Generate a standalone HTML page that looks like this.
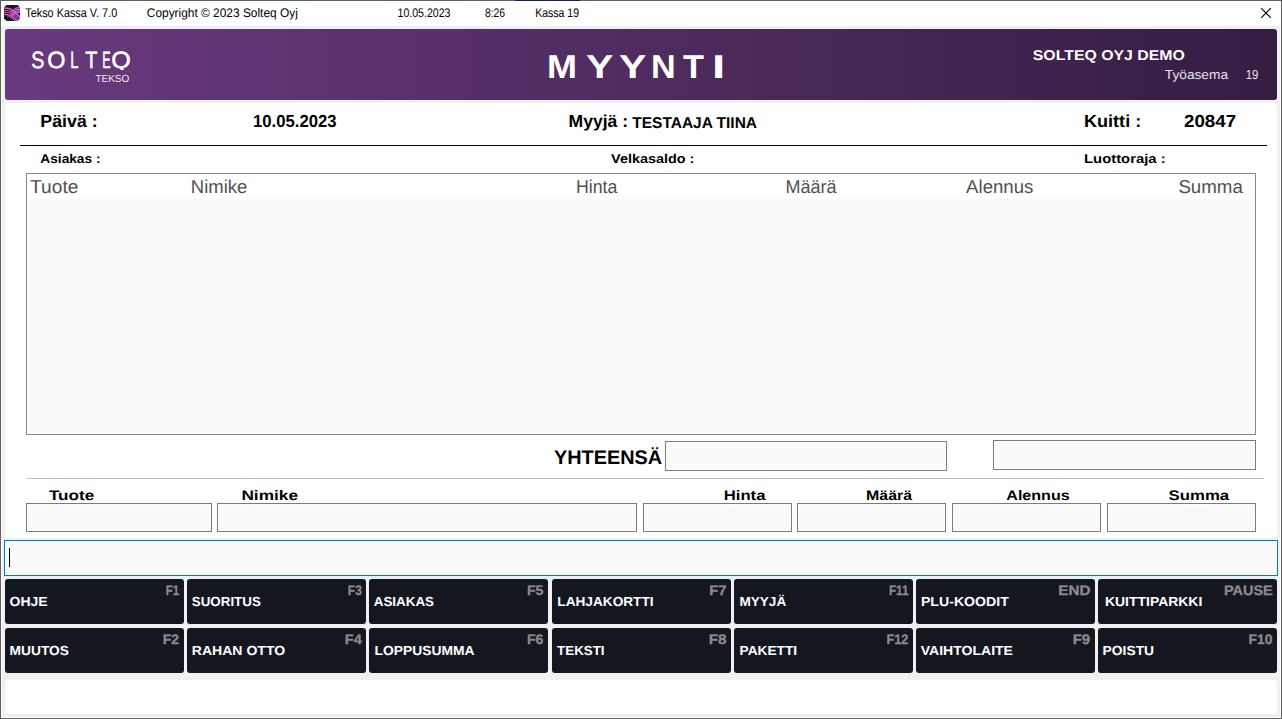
<!DOCTYPE html>
<html lang="fi">
<head>
<meta charset="utf-8">
<title>Tekso Kassa V. 7.0</title>
<style>
*{box-sizing:border-box;margin:0;padding:0}
html,body{width:1282px;height:719px;overflow:hidden;background:#f0f0f0}
body{position:relative;text-rendering:geometricPrecision;font-family:"Liberation Sans",sans-serif;color:#000}
.abs{position:absolute;white-space:nowrap;line-height:1;transform-origin:0 0}
/* window frame */
#frame{left:0;top:0;width:1282px;height:719px;border:1px solid #606060;box-shadow:inset 0 0 0 1px #fff}
#titlebar{left:1px;top:1px;width:1280px;height:25px;background:#fff}
/* banner */
#banner{left:5px;top:29px;width:1272px;height:71px;border-radius:3px;
 background:linear-gradient(90deg,#693a7e,#351d42)}
/* panels */
#panel{left:5px;top:103px;width:1272px;height:435px;background:#fff;border-radius:4px}
#status{left:5px;top:680px;width:1272px;height:34px;background:#fff;border-radius:4px}
#list{left:26px;top:173px;width:1230px;height:262px;border:1px solid #828790;background:#fff}
#listbody{left:28px;top:199px;width:1226px;height:234px;background:#fafafa}
.box{border:1px solid #7a7a7a;background:#fafafa;box-shadow:inset 0 0 0 1px #fff}
#logo span{-webkit-text-stroke:0.5px #fff}
#logo span:last-child{clip-path:inset(-5px -5px 2.4px -5px)}
.pl span{display:inline-block;transform-origin:0 0;line-height:1;vertical-align:baseline}
.btn{background:#141720;border-radius:3px;height:45px;width:179px}
</style>
</head>
<body>
<div id="frame" class="abs"></div>
<div id="titlebar" class="abs"></div>
<div id="topseg" class="abs" style="left:515px;top:0;width:65px;height:1px;background:#10224f"></div>

<!-- title bar icon -->
<svg class="abs" style="left:4px;top:5px" width="16" height="16" viewBox="0 0 16 16">
 <defs><linearGradient id="ig" x1="0" y1="0" x2="16" y2="0" gradientUnits="userSpaceOnUse"><stop offset="0" stop-color="#f0559a"/><stop offset="0.45" stop-color="#e45cd0"/><stop offset="1" stop-color="#d064f5"/></linearGradient>
 <clipPath id="ic"><path d="M2.5 0H13.5L16 2.5V13.5L13.5 16H2.5L0 13.5V2.5Z"/></clipPath></defs>
 <path d="M2.5 0H13.5L16 2.5V13.5L13.5 16H2.5L0 13.5V2.5Z" fill="#15171e"/>
 <g clip-path="url(#ic)" stroke="url(#ig)" fill="none">
 <path d="M-1 3.1 C4 3.1 5.5 3.30 7.5 4.60 L17.5 13.20" stroke-width="1.5"/>
<path d="M-1 5.45 C4 5.45 5.5 5.65 7.5 6.95 L17.5 15.55" stroke-width="1.0"/>
<path d="M-1 7.35 C4 7.35 5.5 7.55 7.5 8.85 L17.5 17.45" stroke-width="1.0"/>
<path d="M-1 9.4 C4 9.4 5.5 9.60 7.5 10.90 L17.5 19.50" stroke-width="1.3"/>
<path d="M3.0 10.9 C5 11.20 6.5 11.90 7.5 12.90 L17.5 21.50" stroke-width="0.9"/>
 <path d="M17 2.6 C13.5 2.6 12 3.00 10 4.20 L6.2 7.60" stroke-width="0.75"/>
<path d="M17 2.6 C13.5 2.6 12 3.00 10 4.20" stroke-width="1.0"/>
<path d="M17 4.2 C13.5 4.2 12 4.60 10 5.80 L6.2 9.20" stroke-width="0.75"/>
<path d="M17 4.2 C13.5 4.2 12 4.60 10 5.80" stroke-width="1.0"/>
<path d="M17 5.8 C13.5 5.8 12 6.20 10 7.40 L6.2 10.80" stroke-width="0.75"/>
<path d="M17 5.8 C13.5 5.8 12 6.20 10 7.40" stroke-width="1.0"/>
<path d="M17 7.4 C13.5 7.4 12 7.80 10 9.00 L6.2 12.40" stroke-width="0.75"/>
<path d="M17 7.4 C13.5 7.4 12 7.80 10 9.00" stroke-width="1.0"/>
 </g>
</svg>
<div id="t1" class="abs" style="left:25px;top:7px;font-size:12.5px;transform:translateX(0.30px) scaleX(0.868);color:#000;">Tekso Kassa V. 7.0</div>
<div id="t2" class="abs" style="left:146px;top:7px;font-size:12.5px;transform:translateX(0.80px) scaleX(0.952);color:#000;">Copyright © 2023 Solteq Oyj</div>
<div id="t3" class="abs" style="left:397px;top:7px;font-size:12.5px;transform:translateX(0.50px) scaleX(0.847);color:#000;">10.05.2023</div>
<div id="t4" class="abs" style="left:484px;top:7px;font-size:12.5px;transform:translateX(0.89px) scaleX(0.829);color:#000;">8:26</div>
<div id="t5" class="abs" style="left:535px;top:7px;font-size:12.5px;transform:translateX(0.25px) scaleX(0.840);color:#000;">Kassa 19</div>
<svg class="abs" style="left:1261px;top:8px" width="10" height="10" viewBox="0 0 10 10"><path d="M0.2 0.2 L9.8 9.8 M9.8 0.2 L0.2 9.8" stroke="#000" stroke-width="1.15" fill="none"/></svg>

<!-- banner -->
<div id="banner" class="abs"></div>
<div id="logo" class="abs pl" style="left:31px;top:49px;font-size:23.5px;font-weight:400;color:#fff;transform:translateX(0.16px)"><span style="width:15.95px;transform:scaleX(0.839)">S</span><span style="width:23.52px;transform:scaleX(0.994)">O</span><span style="width:14.38px;transform:scaleX(0.625)">L</span><span style="width:16.96px;transform:scaleX(0.850)">T</span><span style="width:8.87px;transform:scaleX(0.536)">E</span><span style="width:21.16px;transform:scaleX(1.065)">Q</span></div>
<div id="logo2" class="abs" style="left:95px;top:75px;font-size:10.3px;transform:translateX(0.40px) scaleX(0.969);color:#eee8f2;">TEKSO</div>
<div id="demo" class="abs" style="left:1032px;top:49px;font-size:14.2px;font-weight:bold;transform:translateX(0.80px) scaleX(1.117);color:#fff;">SOLTEQ OYJ DEMO</div>
<div id="tyo" class="abs" style="left:1164px;top:68px;font-size:13px;transform:translateX(0.80px) scaleX(1.054);color:#e9e3ee;">Työasema</div>
<div id="tyo19" class="abs" style="left:1245px;top:68px;font-size:13px;transform:translateX(0.80px) scaleX(0.871);color:#e9e3ee;">19</div>
<div id="myynti" class="abs pl" style="left:546px;top:50px;font-size:33.0px;font-weight:700;color:#fff;transform:translateX(0.92px)"><span style="width:39.38px;transform:scaleX(1.092)">M</span><span style="width:32.70px;transform:scaleX(1.241)">Y</span><span style="width:31.83px;transform:scaleX(1.241)">Y</span><span style="width:32.57px;transform:scaleX(1.035)">N</span><span style="width:28.82px;transform:scaleX(1.040)">T</span><span style="width:12.08px;transform:scaleX(1.440)">I</span></div>


<!-- main panel -->
<div id="panel" class="abs"></div>
<div id="paiva" class="abs" style="left:40px;top:113px;font-size:17.4px;font-weight:bold;transform:translateX(0.28px) scaleX(1.023);color:#000;">Päivä :</div>
<div id="pvm" class="abs" style="left:253px;top:113px;font-size:17.4px;font-weight:bold;transform:translateX(0.04px) scaleX(0.960);color:#000;">10.05.2023</div>
<div id="myyja" class="abs" style="left:568px;top:113px;font-size:17.4px;font-weight:bold;transform:translateX(0.48px) scaleX(1.011);color:#000;">Myyjä :</div>
<div id="testaaja" class="abs" style="left:632px;top:116px;font-size:15.6px;font-weight:bold;transform:translateX(0.30px) scaleX(0.993);color:#000;">TESTAAJA TIINA</div>
<div id="kuitti" class="abs" style="left:1083px;top:113px;font-size:17.4px;font-weight:bold;transform:translateX(0.96px) scaleX(1.040);color:#000;">Kuitti :</div>
<div id="knro" class="abs" style="left:1184px;top:113px;font-size:17.4px;font-weight:bold;transform:translateX(0.00px) scaleX(1.078);color:#000;">20847</div>
<div id="asiakas" class="abs" style="left:40px;top:153px;font-size:12.8px;font-weight:bold;transform:translateX(0.30px) scaleX(1.071);color:#000;">Asiakas :</div>
<div id="velka" class="abs" style="left:611px;top:153px;font-size:12.8px;font-weight:bold;transform:translateX(0.10px) scaleX(1.126);color:#000;">Velkasaldo :</div>
<div id="luotto" class="abs" style="left:1083px;top:153px;font-size:12.8px;font-weight:bold;transform:translateX(0.99px) scaleX(1.161);color:#000;">Luottoraja :</div>
<div id="hr1" class="abs" style="left:20px;top:145px;width:1247px;height:1px;background:#000"></div>


<div id="list" class="abs"></div>
<div id="listbody" class="abs"></div>
<div id="h1" class="abs" style="left:30px;top:178px;font-size:18.67px;transform:translateX(0.10px) scaleX(1.027);color:#505050;">Tuote</div>
<div id="h2" class="abs" style="left:190px;top:178px;font-size:18.67px;transform:translateX(0.81px) scaleX(0.992);color:#505050;">Nimike</div>
<div id="h3" class="abs" style="left:575px;top:178px;font-size:18.67px;transform:translateX(0.95px) scaleX(0.950);color:#505050;">Hinta</div>
<div id="h4" class="abs" style="left:785px;top:178px;font-size:18.67px;transform:translateX(0.53px) scaleX(0.964);color:#505050;">Määrä</div>
<div id="h5" class="abs" style="left:966px;top:178px;font-size:18.67px;transform:translateX(0.10px) scaleX(0.997);color:#505050;">Alennus</div>
<div id="h6" class="abs" style="left:1178px;top:178px;font-size:18.67px;transform:translateX(0.39px) scaleX(1.002);color:#505050;">Summa</div>

<div id="yht" class="abs" style="left:553px;top:449px;font-size:19.7px;font-weight:bold;transform:translateX(0.90px) scaleX(1.010);color:#000;">YHTEENSÄ</div>
<div id="tot1" class="abs box" style="left:665px;top:441px;width:282px;height:30px"></div>
<div id="tot2" class="abs box" style="left:993px;top:440px;width:263px;height:30px"></div>
<div id="hr2" class="abs" style="left:27px;top:478px;width:1237px;height:1px;background:#bebebe"></div>

<div id="l1" class="abs" style="left:48px;top:489px;font-size:13.8px;font-weight:bold;transform:translateX(0.90px) scaleX(1.240);color:#000;">Tuote</div>
<div id="l2" class="abs" style="left:241px;top:489px;font-size:13.8px;font-weight:bold;transform:translateX(0.39px) scaleX(1.253);color:#000;">Nimike</div>
<div id="l3" class="abs" style="left:723px;top:489px;font-size:13.8px;font-weight:bold;transform:translateX(0.68px) scaleX(1.212);color:#000;">Hinta</div>
<div id="l4" class="abs" style="left:866px;top:489px;font-size:13.8px;font-weight:bold;transform:translateX(0.09px) scaleX(1.154);color:#000;">Määrä</div>
<div id="l5" class="abs" style="left:1006px;top:489px;font-size:13.8px;font-weight:bold;transform:translateX(0.30px) scaleX(1.164);color:#000;">Alennus</div>
<div id="l6" class="abs" style="left:1168px;top:489px;font-size:13.8px;font-weight:bold;transform:translateX(0.60px) scaleX(1.216);color:#000;">Summa</div>
<div id="b1" class="abs box" style="left:26px;top:503px;width:186px;height:29px"></div>
<div id="b2" class="abs box" style="left:217px;top:503px;width:420px;height:29px"></div>
<div id="b3" class="abs box" style="left:643px;top:503px;width:149px;height:29px"></div>
<div id="b4" class="abs box" style="left:797px;top:503px;width:149px;height:29px"></div>
<div id="b5" class="abs box" style="left:952px;top:503px;width:149px;height:29px"></div>
<div id="b6" class="abs box" style="left:1107px;top:503px;width:149px;height:29px"></div>

<div id="input" class="abs" style="left:4px;top:540px;width:1274px;height:36px;border:1px solid #0078d7;background:#fafafa;box-shadow:inset 0 0 0 1px #fff"></div>
<div id="caret" class="abs" style="left:9px;top:548px;width:1px;height:19px;background:#000"></div>

<div class="abs btn" style="left:5px;top:579px"></div>
<div class="abs btn" style="left:187px;top:579px"></div>
<div class="abs btn" style="left:369px;top:579px"></div>
<div class="abs btn" style="left:552px;top:579px"></div>
<div class="abs btn" style="left:734px;top:579px"></div>
<div class="abs btn" style="left:916px;top:579px"></div>
<div class="abs btn" style="left:1098px;top:579px"></div>
<div class="abs btn" style="left:5px;top:628px"></div>
<div class="abs btn" style="left:187px;top:628px"></div>
<div class="abs btn" style="left:369px;top:628px"></div>
<div class="abs btn" style="left:552px;top:628px"></div>
<div class="abs btn" style="left:734px;top:628px"></div>
<div class="abs btn" style="left:916px;top:628px"></div>
<div class="abs btn" style="left:1098px;top:628px"></div>
<div id="bl00" class="abs" style="left:9px;top:595px;font-size:13.1px;font-weight:bold;transform:translateX(0.57px) scaleX(1.067);color:#fff;">OHJE</div>
<div id="bl01" class="abs" style="left:191px;top:595px;font-size:13.1px;font-weight:bold;transform:translateX(0.80px) scaleX(1.020);color:#fff;">SUORITUS</div>
<div id="bl02" class="abs" style="left:373px;top:595px;font-size:13.1px;font-weight:bold;transform:translateX(0.70px) scaleX(1.024);color:#fff;">ASIAKAS</div>
<div id="bl03" class="abs" style="left:557px;top:595px;font-size:13.1px;font-weight:bold;transform:translateX(0.30px) scaleX(1.042);color:#fff;">LAHJAKORTTI</div>
<div id="bl04" class="abs" style="left:739px;top:595px;font-size:13.1px;font-weight:bold;transform:translateX(0.49px) scaleX(1.035);color:#fff;">MYYJÄ</div>
<div id="bl05" class="abs" style="left:920px;top:595px;font-size:13.1px;font-weight:bold;transform:translateX(0.90px) scaleX(1.080);color:#fff;">PLU-KOODIT</div>
<div id="bl06" class="abs" style="left:1104px;top:595px;font-size:13.1px;font-weight:bold;transform:translateX(1.00px) scaleX(1.064);color:#fff;">KUITTIPARKKI</div>
<div id="bl10" class="abs" style="left:9px;top:644px;font-size:13.1px;font-weight:bold;transform:translateX(0.59px) scaleX(1.050);color:#fff;">MUUTOS</div>
<div id="bl11" class="abs" style="left:191px;top:644px;font-size:13.1px;font-weight:bold;transform:translateX(0.80px) scaleX(1.072);color:#fff;">RAHAN OTTO</div>
<div id="bl12" class="abs" style="left:374px;top:644px;font-size:13.1px;font-weight:bold;transform:translateX(0.50px) scaleX(1.058);color:#fff;">LOPPUSUMMA</div>
<div id="bl13" class="abs" style="left:557px;top:644px;font-size:13.1px;font-weight:bold;transform:translateX(0.10px) scaleX(1.019);color:#fff;">TEKSTI</div>
<div id="bl14" class="abs" style="left:739px;top:644px;font-size:13.1px;font-weight:bold;transform:translateX(0.50px) scaleX(1.048);color:#fff;">PAKETTI</div>
<div id="bl15" class="abs" style="left:920px;top:644px;font-size:13.1px;font-weight:bold;transform:translateX(0.70px) scaleX(1.072);color:#fff;">VAIHTOLAITE</div>
<div id="bl16" class="abs" style="left:1102px;top:644px;font-size:13.1px;font-weight:bold;transform:translateX(0.59px) scaleX(1.056);color:#fff;">POISTU</div>
<div id="bk00" class="abs" style="left:165px;top:584px;font-size:13.9px;font-weight:bold;transform:translateX(0.80px) scaleX(0.825);color:#898a8e;-webkit-text-stroke:0.3px #898a8e;">F1</div>
<div id="bk01" class="abs" style="left:347px;top:584px;font-size:13.9px;font-weight:bold;transform:translateX(0.87px) scaleX(0.864);color:#898a8e;-webkit-text-stroke:0.3px #898a8e;">F3</div>
<div id="bk02" class="abs" style="left:526px;top:584px;font-size:13.9px;font-weight:bold;transform:translateX(0.88px) scaleX(1.020);color:#898a8e;-webkit-text-stroke:0.3px #898a8e;">F5</div>
<div id="bk03" class="abs" style="left:709px;top:584px;font-size:13.9px;font-weight:bold;transform:translateX(0.29px) scaleX(1.068);color:#898a8e;-webkit-text-stroke:0.3px #898a8e;">F7</div>
<div id="bk04" class="abs" style="left:888px;top:584px;font-size:13.9px;font-weight:bold;transform:translateX(0.88px) scaleX(0.845);color:#898a8e;-webkit-text-stroke:0.3px #898a8e;">F11</div>
<div id="bk05" class="abs" style="left:1058px;top:584px;font-size:13.9px;font-weight:bold;transform:translateX(0.36px) scaleX(1.094);color:#898a8e;-webkit-text-stroke:0.3px #898a8e;">END</div>
<div id="bk06" class="abs" style="left:1224px;top:584px;font-size:13.9px;font-weight:bold;transform:translateX(0.00px) scaleX(1.040);color:#898a8e;-webkit-text-stroke:0.3px #898a8e;">PAUSE</div>
<div id="bk10" class="abs" style="left:162px;top:633px;font-size:13.9px;font-weight:bold;transform:translateX(0.78px) scaleX(1.008);color:#898a8e;-webkit-text-stroke:0.3px #898a8e;">F2</div>
<div id="bk11" class="abs" style="left:344px;top:633px;font-size:13.9px;font-weight:bold;transform:translateX(0.87px) scaleX(1.045);color:#898a8e;-webkit-text-stroke:0.3px #898a8e;">F4</div>
<div id="bk12" class="abs" style="left:526px;top:633px;font-size:13.9px;font-weight:bold;transform:translateX(0.90px) scaleX(1.019);color:#898a8e;-webkit-text-stroke:0.3px #898a8e;">F6</div>
<div id="bk13" class="abs" style="left:708px;top:633px;font-size:13.9px;font-weight:bold;transform:translateX(0.67px) scaleX(1.106);color:#898a8e;-webkit-text-stroke:0.3px #898a8e;">F8</div>
<div id="bk14" class="abs" style="left:886px;top:633px;font-size:13.9px;font-weight:bold;transform:translateX(0.50px) scaleX(0.917);color:#898a8e;-webkit-text-stroke:0.3px #898a8e;">F12</div>
<div id="bk15" class="abs" style="left:1072px;top:633px;font-size:13.9px;font-weight:bold;transform:translateX(0.76px) scaleX(1.072);color:#898a8e;-webkit-text-stroke:0.3px #898a8e;">F9</div>
<div id="bk16" class="abs" style="left:1248px;top:633px;font-size:13.9px;font-weight:bold;transform:translateX(0.56px) scaleX(0.994);color:#898a8e;-webkit-text-stroke:0.3px #898a8e;">F10</div>
<div id="status" class="abs"></div>
</body>
</html>
